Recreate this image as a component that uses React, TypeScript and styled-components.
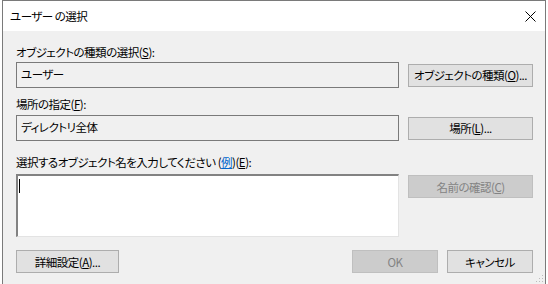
import React from 'react';
import styled, {createGlobalStyle} from "styled-components";

const GlobalStyle = createGlobalStyle`
  html, body {
    margin: 0;
    padding: 0;
    background: #ffffff;
    width: 548px;
    height: 284px;
    overflow: hidden;
  }
  body {
    font-family: "Noto Sans CJK JP", "Noto Sans", sans-serif;
    font-size: 11.5px;
    letter-spacing: -0.5px;
    font-feature-settings: "palt";
    color: #000;
  }
`

const Desktop = styled.div`
  height: 284px;
  padding-left: 2px;
  box-sizing: border-box;
`

const Window = styled.div`
  width: 544px;
  height: 284px;
  box-sizing: border-box;
  border: 1px solid #7a7a7a;
  border-bottom: none;
  background: #f0f0f0;
  display: flex;
  flex-direction: column;
  position: relative;
`

const TitleBar = styled.div`
  height: 30px;
  background: #ffffff;
  display: flex;
  align-items: center;
  justify-content: space-between;
  padding-left: 7px;
`

const Title = styled.span`
  line-height: 16px;
  padding-bottom: 1px;
`

const CloseButton = styled.div`
  width: 30px;
  height: 30px;
  display: flex;
  align-items: center;
  justify-content: center;
`

const Body = styled.div`
  flex: 1;
  padding: 13px 12px 0 13px;
  display: flex;
  flex-direction: column;
`

const Label = styled.div<{ $gap: number; $top?: number }>`
  line-height: 16px;
  height: 16px;
  white-space: nowrap;
  margin-top: ${p => p.$top || 0}px;
  margin-bottom: ${p => p.$gap}px;
`

const Row = styled.div<{ $top?: boolean }>`
  display: flex;
  align-items: ${p => p.$top ? 'flex-start' : 'center'};
  gap: 9px;
`

const Field = styled.div`
  width: 383px;
  height: 26px;
  box-sizing: border-box;
  border: 1px solid #7a7a7a;
  background: #f0f0f0;
  padding: 0 4px;
  line-height: 23px;
  white-space: nowrap;
`

const TextArea = styled.div`
  width: 383px;
  height: 63px;
  box-sizing: border-box;
  border-top: 2px solid #828282;
  border-left: 2px solid #828282;
  border-right: 1px solid #e3e3e3;
  border-bottom: 1px solid #e3e3e3;
  background: #ffffff;
  position: relative;
`

const Caret = styled.div`
  position: absolute;
  left: 1px;
  top: 3px;
  width: 1px;
  height: 14px;
  background: #000;
`

const Button = styled.div<{ $width: number; $disabled?: boolean; $top?: number }>`
  width: ${p => p.$width}px;
  height: 23px;
  box-sizing: border-box;
  border: 1px solid ${p => p.$disabled ? '#bfbfbf' : '#adadad'};
  background: ${p => p.$disabled ? '#cccccc' : '#e1e1e1'};
  color: ${p => p.$disabled ? '#838383' : '#000'};
  display: flex;
  align-items: center;
  justify-content: center;
  margin-top: ${p => p.$top || 0}px;
  line-height: 16px;
  white-space: nowrap;
`

const Footer = styled.div`
  display: flex;
  align-items: center;
  margin-top: 13px;
`

const Spacer = styled.div`
  flex: 1;
`

const FooterGroup = styled.div`
  display: flex;
  gap: 9px;
`

const Link = styled.span`
  color: #0066cc;
  text-decoration: underline;
`

const U = styled.span`
  text-decoration: underline;
`

const Grip = styled.svg`
  position: absolute;
  right: 1px;
  bottom: 1px;
`

const App: React.FC = () => {
    return (
        <Desktop>
            <GlobalStyle/>
            <Window>
                <TitleBar>
                    <Title>ユーザー の選択</Title>
                    <CloseButton>
                        <svg width="11" height="11" viewBox="0 0 11 11">
                            <path d="M0.5 0.5 L10.5 10.5 M10.5 0.5 L0.5 10.5" stroke="#000" strokeWidth="1"/>
                        </svg>
                    </CloseButton>
                </TitleBar>
                <Body>
                    <Label $gap={2}>オブジェクトの種類の選択(<U>S</U>):</Label>
                    <Row>
                        <Field>ユーザー</Field>
                        <Button $width={125}>オブジェクトの種類(<U>O</U>)...</Button>
                    </Row>
                    <Label $gap={3} $top={8}>場所の指定(<U>F</U>):</Label>
                    <Row>
                        <Field>ディレクトリ全体</Field>
                        <Button $width={125}>場所(<U>L</U>)...</Button>
                    </Row>
                    <Label $gap={4} $top={13}>
                        選択するオブジェクト名を入力してください (<Link>例</Link>)(<U>E</U>):
                    </Label>
                    <Row $top>
                        <TextArea><Caret/></TextArea>
                        <Button $width={125} $disabled $top={1}>名前の確認(<U>C</U>)</Button>
                    </Row>
                    <Footer>
                        <Button $width={103}>詳細設定(<U>A</U>)...</Button>
                        <Spacer/>
                        <FooterGroup>
                            <Button $width={86} $disabled>OK</Button>
                            <Button $width={86}>キャンセル</Button>
                        </FooterGroup>
                    </Footer>
                </Body>
                <Grip width="8" height="8" viewBox="0 0 8 8">
                    <rect x="6" y="0" width="1" height="1" fill="#bcbcbc"/>
                    <rect x="3" y="3" width="1" height="1" fill="#bcbcbc"/>
                    <rect x="6" y="3" width="1" height="1" fill="#bcbcbc"/>
                    <rect x="0" y="6" width="1" height="1" fill="#bcbcbc"/>
                    <rect x="3" y="6" width="1" height="1" fill="#bcbcbc"/>
                    <rect x="6" y="6" width="1" height="1" fill="#bcbcbc"/>
                </Grip>
            </Window>
        </Desktop>
    )
}

export default App
